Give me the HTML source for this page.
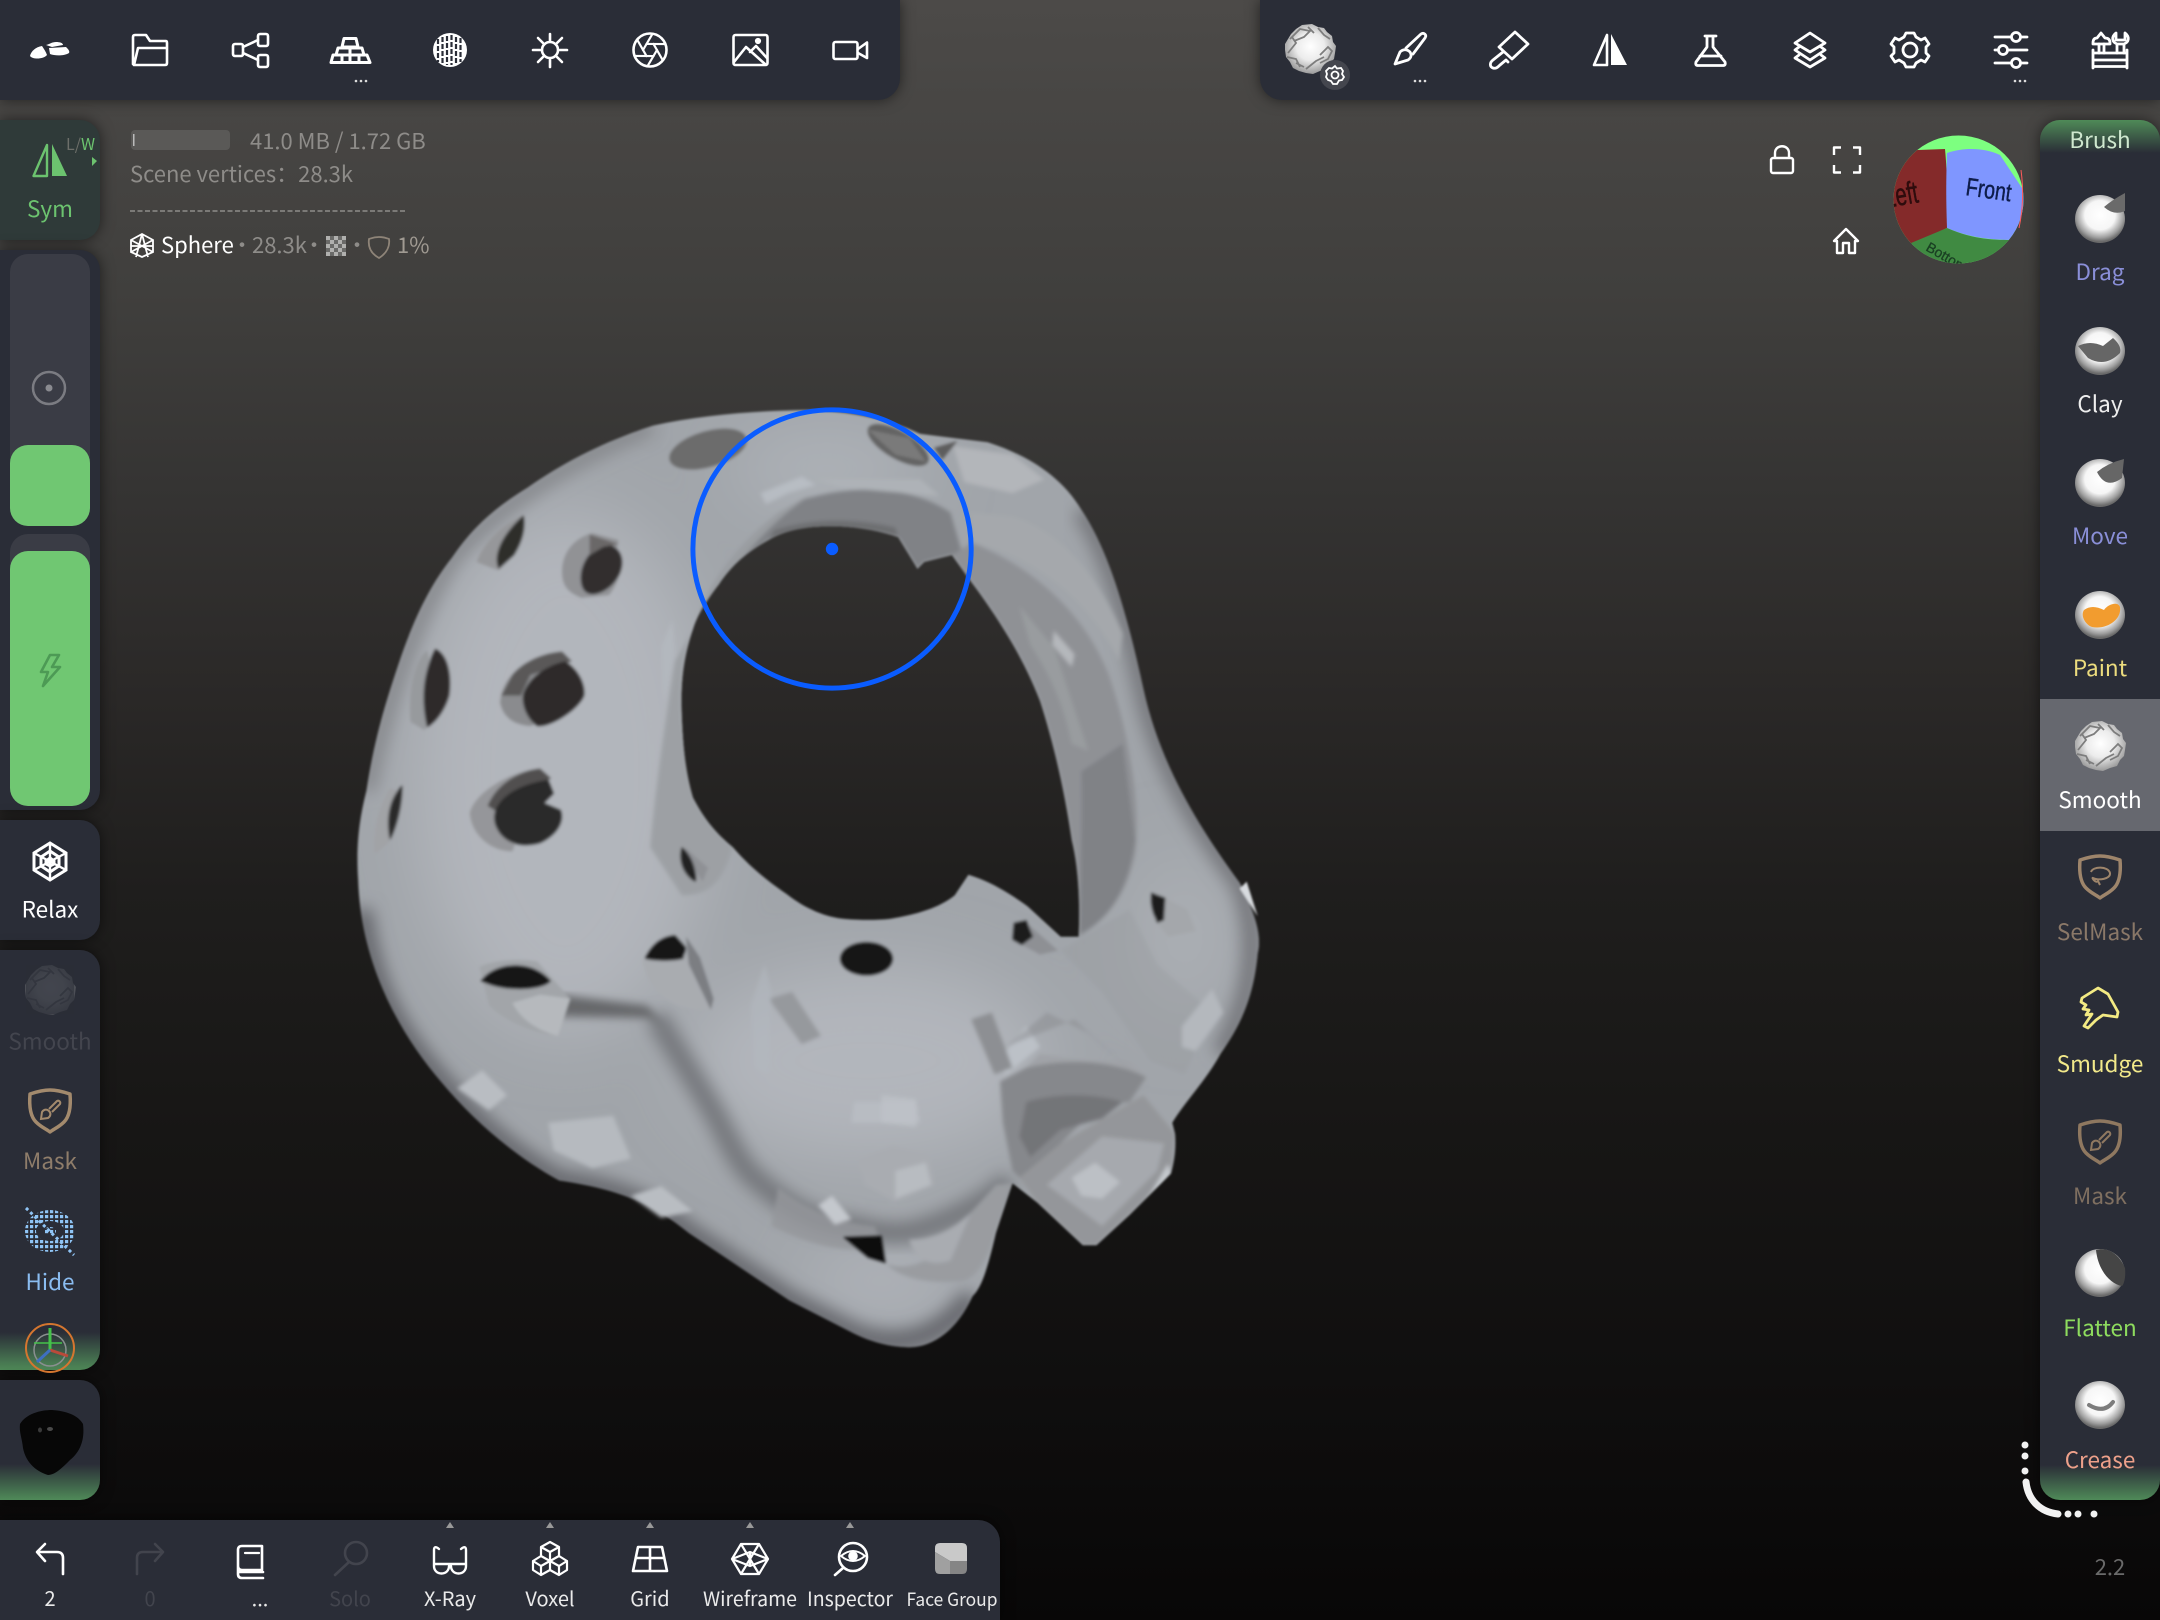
<!DOCTYPE html>
<html><head><meta charset="utf-8">
<style>
html,body{margin:0;padding:0;width:2160px;height:1620px;overflow:hidden;background:#111}
#bg{position:absolute;left:0;top:0;width:2160px;height:1620px;background:linear-gradient(180deg,#4c4a48 0%,#403f3d 18%,#353433 30%,#2b2928 42%,#1f1e1d 55%,#171615 70%,#100f0f 85%,#080707 100%)}
.p{position:absolute;background:#2a2d37;box-shadow:0 0 14px rgba(0,0,0,.55)}
svg{position:absolute;left:0;top:0}
text{font-family:"Noto Sans CJK SC","Liberation Sans",sans-serif}
</style></head><body>
<div id="bg"></div>

<svg width="2160" height="1620" viewBox="0 0 1568 1176" xmlns="http://www.w3.org/2000/svg">
<defs>
<filter id="b1"><feGaussianBlur stdDeviation="0.7"/></filter>
<filter id="b15"><feGaussianBlur stdDeviation="1.400"/></filter>
<filter id="b3"><feGaussianBlur stdDeviation="3"/></filter>
<filter id="b6"><feGaussianBlur stdDeviation="6"/></filter>
<filter id="b25"><feGaussianBlur stdDeviation="25"/></filter>
<clipPath id="sil"><path clip-rule="evenodd" d="M571,298 C610,296 645,304 668,315 L717,321 C745,330 770,345 785,370 C805,400 818,445 830,500 C842,555 870,600 900,641 C912,665 916,680 913,692 C910,725 900,745 886,765 C875,785 860,800 851,815 L853,823 C854,835 852,845 850,852 L820,882 L796,904 L786,904 L753,873 L735,859 L723,895 C716,925 712,935 706,941 C695,965 678,978 660,978 C645,978 630,973 620,968 L573,944 L500,895 C470,870 440,862 406,857 C375,840 345,815 320,785 C290,750 262,700 260,639 C258,610 262,590 266,574 C272,535 280,510 289,483 C300,450 312,425 328,405 C345,380 362,367 383,354 C410,335 440,320 474,309 C505,302 540,299 571,298 Z
M603,382 C585,382 570,385 558,392 C540,402 530,412 522,424 C512,437 506,447 503,457 C495,480 494,500 495,522 C496,545 498,562 503,579 C512,596 520,605 532,615 C545,630 558,640 571,649 C585,660 600,666 613,667 C625,668 636,668 646,667 C665,664 682,659 693,650 L703,635 C720,640 735,650 746,658 L770,680 L783,680 C784,655 783,630 778,610 C773,575 765,540 755,509 C742,475 722,445 704,421 L691,403 L671,408 L666,413 C660,403 655,395 652,390 C638,385 620,382 603,382 Z"/></clipPath>
</defs>

<g filter="url(#b1)">
<path fill="#a1a5aa" fill-rule="evenodd" d="M571,298 C610,296 645,304 668,315 L717,321 C745,330 770,345 785,370 C805,400 818,445 830,500 C842,555 870,600 900,641 C912,665 916,680 913,692 C910,725 900,745 886,765 C875,785 860,800 851,815 L853,823 C854,835 852,845 850,852 L820,882 L796,904 L786,904 L753,873 L735,859 L723,895 C716,925 712,935 706,941 C695,965 678,978 660,978 C645,978 630,973 620,968 L573,944 L500,895 C470,870 440,862 406,857 C375,840 345,815 320,785 C290,750 262,700 260,639 C258,610 262,590 266,574 C272,535 280,510 289,483 C300,450 312,425 328,405 C345,380 362,367 383,354 C410,335 440,320 474,309 C505,302 540,299 571,298 Z
M603,382 C585,382 570,385 558,392 C540,402 530,412 522,424 C512,437 506,447 503,457 C495,480 494,500 495,522 C496,545 498,562 503,579 C512,596 520,605 532,615 C545,630 558,640 571,649 C585,660 600,666 613,667 C625,668 636,668 646,667 C665,664 682,659 693,650 L703,635 C720,640 735,650 746,658 L770,680 L783,680 C784,655 783,630 778,610 C773,575 765,540 755,509 C742,475 722,445 704,421 L691,403 L671,408 L666,413 C660,403 655,395 652,390 C638,385 620,382 603,382 Z"/>

<g clip-path="url(#sil)">
<!-- broad light -->
<g filter="url(#b25)">
<ellipse cx="410" cy="560" rx="110" ry="190" fill="#b2b6bc"/>
<ellipse cx="630" cy="770" rx="130" ry="70" fill="#b2b6bc"/>
<ellipse cx="600" cy="340" rx="70" ry="30" fill="#aeb2b8"/>
<ellipse cx="860" cy="680" rx="40" ry="60" fill="#aaaeb3"/>
<ellipse cx="640" cy="930" rx="60" ry="25" fill="#b0b4ba"/>
</g>
<!-- edge darkening -->
<path fill="none" stroke="#66686d" stroke-width="16" filter="url(#b6)" d="M262,660 C270,720 290,750 320,785 C345,815 375,840 406,857 C440,862 470,870 500,895 L573,944 L620,968 C645,978 678,978 706,941"/>
<path fill="none" stroke="#85878b" stroke-width="12" filter="url(#b6)" d="M266,574 C280,510 300,450 328,405 C362,367 410,335 474,309"/>
<path fill="none" stroke="#74767a" stroke-width="14" filter="url(#b6)" d="M785,370 C805,400 818,445 830,500 C842,555 870,600 900,641 C916,680 910,725 886,765"/>
<!-- nose ridge -->
<path fill="none" stroke="#75777b" stroke-width="16" filter="url(#b6)" d="M476,738 C495,770 508,790 520,811 C532,835 540,850 550,857 C575,880 600,890 620,890 C640,896 655,896 666,893 C695,885 720,870 733,857"/>
<path fill="#66676a" filter="url(#b3)" d="M406,722 L470,730 L482,745 L470,739 L406,738Z"/>

<g filter="url(#b15)">
<!-- upper hole rim -->
<path fill="#808286" d="M522,424 C535,400 555,375 585,362 C620,352 660,352 690,372 L704,421 L691,403 L671,408 L666,413 L652,390 C620,380 585,380 558,392 Z"/>
<path fill="#9a9da1" d="M505,455 C512,425 535,395 565,372 L590,358 C565,375 545,395 525,425 Z"/>
<path fill="#6d6e71" d="M558,392 C585,382 625,382 652,390 L650,383 C620,376 590,376 562,385 Z"/>
<path fill="#bec3ca" d="M552,358 L582,346 L592,352 L572,358 L556,366 Z" opacity=".7"/>
<path fill="#aeb2b7" d="M592,348 H668 L682,360 L612,354 Z"/>
<!-- inner left shading -->
<path fill="#9da0a4" d="M495,522 C494,500 495,480 503,457 L490,480 C482,530 476,570 472,615 L495,650 C515,650 525,640 532,615 C512,596 503,579 495,522 Z"/>
<path fill="#b3b8be" d="M480,470 L488,450 L490,475 L482,510Z"/>
<!-- right band -->
<path fill="#b3b6ba" d="M692,324 L735,330 L758,348 L735,358 L700,350Z"/>
<path fill="#8f9195" d="M704,421 L691,403 L706,394 C745,410 785,440 805,490 C822,540 828,590 824,620 C818,650 803,668 783,680 C784,655 783,630 778,610 C773,575 765,540 755,509 C742,475 722,445 704,421 Z"/>
<path fill="#a5a8ac" d="M706,394 C745,402 790,432 812,480 L815,460 C798,420 770,385 735,375 L705,372Z"/>
<path fill="#a0a3a7" d="M740,440 L765,470 L785,530 L790,545 L778,540 C772,510 762,490 748,468Z" opacity=".6"/>
<path fill="#b5b8bc" d="M765,458 L780,475 L778,484 L764,468Z"/>
<path fill="#808286" d="M785,560 L815,540 L824,610 C818,650 803,668 784,678 C784,640 786,600 785,560Z"/>
<!-- nose -->
<path fill="#b8bcc2" d="M620,800 H665 L668,815 H618Z"/>
<path fill="#bfc3c9" d="M640,795 L665,798 V818 L640,815Z" opacity=".7"/>
<path fill="#96999d" d="M558,725 L575,720 L596,752 L582,758 Z"/>
<path fill="#b3b8be" d="M545,730 L555,700 L560,720 L558,780 L548,775Z" opacity=".6"/>
<!-- lower ring -->
<path fill="#86888c" d="M726,785 L745,775 C775,768 810,768 832,782 L820,800 L800,802 L785,815 L770,830 L745,860 L735,850 L728,815Z"/>
<path fill="#737478" d="M745,800 C760,795 790,792 815,800 L800,812 L770,820 L748,840 L740,825Z"/>
<path fill="#a0a3a7" d="M745,775 L755,765 L790,770 L820,770 L832,782 C810,770 775,768 745,775Z"/>
<path fill="#bcc1c7" d="M725,770 L745,745 L755,760 L730,780Z"/>
<path fill="#8d8f93" d="M705,740 L720,735 L735,775 L722,780 Z"/>
<path fill="#8a8c90" d="M730,760 L780,740 L835,790 L790,750 L760,735Z" opacity=".5"/>
<!-- lower right lobe -->
<path fill="#94969a" d="M740,855 L770,830 L830,795 L853,823 L850,852 L796,904 L786,904 L753,873Z"/>
<path fill="#a6a9ae" d="M760,860 L800,825 L845,830 L840,850 L800,890Z"/>
<path fill="#bcc0c5" d="M778,855 L795,844 L813,858 L800,870 L785,868Z"/>
<path fill="#c6cacf" d="M830,875 L848,845 L850,852 L835,880Z"/>
<!-- bottom inner cavity -->
<path fill="#9a9ca0" d="M643,917 C660,925 690,912 705,880 L723,860 L735,859 L723,895 C718,910 712,925 700,930 C680,932 655,930 643,917Z"/>
<path fill="#a9acb1" d="M660,900 C680,900 695,890 705,880 L690,915 C675,920 665,915 660,900Z"/>
<path fill="#95979b" d="M560,890 C590,905 615,910 640,905 L635,890 C610,888 585,878 565,862Z" opacity=".8"/>
<path fill="#95989c" d="M770,690 L820,660 L840,700 L880,735 L860,780 L835,770 L800,720Z" opacity=".3"/>
</g>
</g>

<!-- holes + walls -->
<g filter="url(#b1)">
<ellipse cx="514" cy="326" rx="29" ry="13" transform="rotate(-16 514 326)" fill="#6c6c6c"/>
<ellipse cx="652" cy="323" rx="25" ry="10" transform="rotate(30 652 323)" fill="#646464"/>
<path d="M630,312 L660,318 L672,335 L650,330Z" fill="#7a7a7a"/>
<path d="M678,325 L695,320 L684,334Z" fill="#5d5d5d"/>

<path d="M380,374 C365,380 350,395 346,408 L356,412 L362,414 L373,403 C378,393 381,384 380,374Z" fill="#96979a"/>
<path d="M380,374 C382,385 378,395 373,403 L362,413 C358,405 362,390 380,374Z" fill="#2f2d2c"/>

<path d="M430,387 C418,390 408,400 408,415 C408,425 412,430 422,434 L442,432 C452,420 452,405 448,398 L449,392Z" fill="#919295"/>
<path d="M436,395 C426,402 420,412 422,424 C424,433 432,433 440,428 C450,422 455,408 449,400 C446,396 441,394 436,395Z" fill="#302e2d"/>
<path d="M428,388 L449,395 L438,397 L428,403Z" fill="#6a6868"/>

<path d="M310,472 C300,480 296,505 298,524 L308,530 L322,515Z" fill="#979a9d"/>
<path d="M316,471 C325,475 328,490 326,505 C322,518 315,525 310,528 C306,510 306,490 316,471Z" fill="#2e2c2b"/>

<path d="M400,475 C380,480 365,490 363,510 C365,520 372,526 385,527 L415,515 L400,490 Z" fill="#8a8b8e"/>
<path d="M372,490 C380,480 395,474 408,473 L415,480 L385,490 L378,505 L364,505Z" fill="#5a5858"/>
<path d="M410,480 C420,486 425,497 424,505 C420,515 400,528 390,527 C382,522 378,510 380,503 C385,490 398,483 410,480Z" fill="#2e2c2b"/>

<path d="M392,558 C370,560 345,575 341,590 C342,605 355,618 372,618 L385,580Z" fill="#95969a"/>
<path d="M392,558 C375,560 360,570 354,585 L362,590 L380,574 L400,565Z" fill="#514f4f"/>
<path d="M398,566 L402,576 L395,583 L407,588 C410,596 405,606 392,612 C378,616 365,612 360,600 C354,585 370,570 398,566Z" fill="#2c2a29"/>

<path d="M283,572 C275,585 270,605 272,620 L282,612 L292,575Z" fill="#a1a3a6"/>
<path d="M292,570 C292,585 288,600 283,610 C280,595 282,580 292,570Z" fill="#2c2a29"/>

<path d="M497,615 L514,630 L510,640 L500,625Z" fill="#8f9195"/>
<path d="M495,615 C502,620 506,632 505,640 C497,636 492,625 495,615Z" fill="#232120"/>

<path d="M348,702 C355,698 375,695 390,698 L414,725 L405,752 C385,750 365,740 355,730Z" fill="#a2a5a9"/>
<path d="M372,728 L392,722 L414,725 L405,752 C390,748 378,740 372,728Z" fill="#b6b9bd"/>
<path d="M349,712 C358,699 385,695 400,712 C395,719 365,721 349,712Z" fill="#191817"/>

<path d="M466,697 L498,693 L516,733 C495,735 478,725 470,710Z" fill="#a9acb0"/>
<path d="M498,680 L508,695 L518,725 L516,733 L500,700Z" fill="#7c7e82"/>
<path d="M468,696 C472,688 478,680 490,679 L498,688 L496,696 C490,698 475,698 468,696Z" fill="#191817"/>

<ellipse cx="629" cy="696" rx="19" ry="12" fill="#191817"/>

<path d="M743,668 L768,690 L755,693 L735,682 Z" fill="#8e9094"/>
<path d="M736,670 L745,668 L750,680 L742,686 L735,682Z" fill="#1c1b1a"/>

<path d="M838,648 L862,660 L868,676 L848,680 L838,668Z" fill="#a4a7ab"/>
<path d="M836,648 L846,652 L845,668 L840,670 C836,660 835,655 836,648Z" fill="#1c1b1a"/>
</g>
<g filter="url(#b15)">
<path d="M332,790 L350,777 L368,795 L355,806Z" fill="#b9bdc2"/>
<path d="M398,815 L445,810 L458,841 L430,848 L402,835Z" fill="#b6babf"/>
<path d="M458,868 L480,861 L503,879 L480,884Z" fill="#b9bdc2"/>
<path d="M622,842 L648,832 L675,838 L678,860 L650,872 L628,860Z" fill="#a9acb1"/>
<path d="M650,850 L672,844 L676,860 L650,870Z" fill="#b8bcc1"/>
<path d="M594,875 L604,868 L618,885 L606,889Z" fill="#c4c8cd"/>
<path d="M858,745 L880,718 L888,735 L868,763 L858,760Z" fill="#b4b8bd"/>
</g>
<path d="M612,898 L640,897 L643,917 L630,913Z" fill="#0f0e0e" filter="url(#b1)"/>
<path d="M905,640 L913,665 L900,645Z" fill="#d8dbdf"/>
</g>

<!-- brush circle -->
<circle cx="604" cy="398.500" r="101" fill="none" stroke="#0a5cff" stroke-width="3.600"/>
<circle cx="604" cy="398.500" r="4.500" fill="#0a5cff"/>
</svg>

<!-- panels -->
<div class="p" style="left:0;top:0;width:900px;height:100px;border-radius:0 0 22px 0"></div>
<div class="p" style="left:1260px;top:0;width:900px;height:100px;border-radius:0 0 0 22px"></div>
<div class="p" style="left:0;top:120px;width:100px;height:120px;border-radius:0 20px 20px 0;background:#2f3a39"></div>
<div class="p" style="left:0;top:250px;width:100px;height:560px;border-radius:0 20px 20px 0"></div>
<div style="position:absolute;left:10px;top:254px;width:80px;height:272px;border-radius:18px;background:#3a3c45"></div>
<div style="position:absolute;left:10px;top:445px;width:80px;height:81px;border-radius:18px;background:#70c772"></div>
<div style="position:absolute;left:10px;top:534px;width:80px;height:272px;border-radius:18px;background:#3a3c45"></div>
<div style="position:absolute;left:10px;top:551px;width:80px;height:255px;border-radius:18px;background:#70c772"></div>
<div class="p" style="left:0;top:820px;width:100px;height:120px;border-radius:0 20px 20px 0"></div>
<div class="p" style="left:0;top:950px;width:100px;height:420px;border-radius:0 20px 20px 0;background:linear-gradient(180deg,#2a2d37 0,#2a2d37 91%,#4f8a58 100%)"></div>
<div class="p" style="left:0;top:1380px;width:100px;height:120px;border-radius:0 20px 20px 0;background:linear-gradient(180deg,#2a2d37 0,#2a2d37 70%,#4f8a58 100%)"></div>
<div class="p" style="left:2040px;top:120px;width:120px;height:1380px;border-radius:20px;background:linear-gradient(180deg,#4f8a58 0,#2a2d37 33px,#2a2d37 1345px,#4f8a58 100%)"></div>
<div style="position:absolute;left:2040px;top:699px;width:120px;height:132px;background:#66686f"></div>
<div class="p" style="left:0;top:1520px;width:1000px;height:100px;border-radius:0 22px 0 0"></div>

<svg width="2160" height="1620" viewBox="0 0 2160 1620" xmlns="http://www.w3.org/2000/svg">
<defs>
<radialGradient id="ball" cx=".5" cy=".42" r=".55"><stop offset="0" stop-color="#fff"/><stop offset=".55" stop-color="#f6f6f6"/><stop offset=".85" stop-color="#a0a0a0"/><stop offset="1" stop-color="#6a6a6a"/></radialGradient>
<radialGradient id="ballf" cx=".5" cy=".45" r=".55"><stop offset="0" stop-color="#fff"/><stop offset=".5" stop-color="#ececec"/><stop offset="1" stop-color="#9a9a9a"/></radialGradient>
<pattern id="dotp" width="5" height="5" patternUnits="userSpaceOnUse"><rect width="3.200" height="3.200" fill="#8fc4f5"/></pattern>
<g id="lump"><path fill="url(#ballf)" d="M-8,-24 L2,-25 L8,-22 L14,-21 L17,-17 L22,-13 L23,-7 L26,-3 L25,4 L24,10 L20,14 L17,20 L10,22 L3,25 L-4,24 L-11,22 L-17,19 L-20,13 L-24,8 L-25,1 L-25,-5 L-22,-10 L-19,-15 L-14,-20 Z"/>
<path fill="none" stroke="#7d7d7d" stroke-width="1.800" d="M-20,-10 L-10,-20 L0,-18 L-6,-12 L-16,-8 M-22,4 L-14,-6 L-18,-12 M-23,8 L-14,10 L-10,18 M10,6 L18,-2 L22,2 L18,10 L10,14 M-4,20 L6,12 L14,8 M-14,14 L-6,18 M8,-21 L14,-14 L20,-10 M-2,-22 L4,-16"/>
</g>
<g id="shield"><path d="M0,-20 C7,-20 14,-18 20,-16 C21,-4 20,6 14,12 C9,17 4,19 0,22 C-4,19 -9,17 -14,12 C-20,6 -21,-4 -20,-16 C-14,-18 -7,-20 0,-20Z" fill="none" stroke-width="3.500" stroke-linejoin="round"/></g>
<g id="minibrush"><path d="M-9,9 L-8,2 C-6,-1 -3,-1 -1,1 C1,3 1,6 -2,8 Z M-1,-1 L7,-9 C9,-10 11,-8 10,-6 L2,2" fill="none" stroke-width="2"/></g>
<g id="dots"><circle cx="-5" r="1.300"/><circle cx="0" r="1.300"/><circle cx="5" r="1.300"/></g>
</defs>

<!-- TOP LEFT ICONS -->
<g fill="#fff">
<path d="M30,56 C31,51 36,47 42,46 C44,49 46,52 47,55 C44,59 33,60 30,56Z"/>
<path d="M46,45 C50,44 52,42 56,42 C60,42 63,43 63,45 L52,47Z"/>
<path d="M49,48 L66,47 C68,49 70,51 69,53 C64,56 55,56 50,54Z"/>
</g>
<g fill="none" stroke="#fff" stroke-width="2.600" stroke-linejoin="round" stroke-linecap="round">
<path d="M133,64 V37 Q133,35 135,35 H146 L150,41 H166 Q167,41 167,43 V63 Q167,65 165,65 H134 L138,48 H167"/>
<rect x="233" y="44" width="10" height="12" rx="2"/><rect x="258" y="34" width="10" height="12" rx="2"/><rect x="258" y="55" width="10" height="12" rx="2"/>
<path d="M243,47 L258,40 M243,53 L258,60"/>
<g stroke-width="3">
<path d="M344,38.500 H356 L358,47 H342Z"/>
<path d="M338,48 H362 L364,55 H336Z M350,48 V55"/>
<path d="M331,62.500 L333,55 H367 L370,62.500Z M342,55 V62 M350,55 V62 M359,55 V62"/>
</g>
<circle cx="550" cy="50" r="8"/>
<path d="M550,34 V40 M550,60 V67 M533,50 H540 M560,50 H567 M538,38 L543,43 M557,57 L562,62 M562,38 L557,43 M543,57 L538,62"/>
<circle cx="650" cy="50" r="16.500"/>
<g stroke-width="2.200">
<path d="M657,50 L647.500,66.200"/><path d="M657,50 L647.500,66.200" transform="rotate(60 650 50)"/><path d="M657,50 L647.500,66.200" transform="rotate(120 650 50)"/><path d="M657,50 L647.500,66.200" transform="rotate(180 650 50)"/><path d="M657,50 L647.500,66.200" transform="rotate(240 650 50)"/><path d="M657,50 L647.500,66.200" transform="rotate(300 650 50)"/>
</g>
<rect x="733.500" y="35" width="34" height="30" rx="2"/>
<path d="M734,62 L746,47 L765,64"/><path d="M750,52 L756,46 L767,58"/>
<circle cx="758" cy="41" r="1.800" fill="#fff"/>
<rect x="833.500" y="42" width="24" height="17" rx="2"/><path d="M858,49 L867,42.500 V58 L858,53"/>
</g>
<circle cx="450" cy="50" r="17" fill="#fff"/>
<g stroke="#2a2d37" stroke-width="2.200" stroke-dasharray="5 2"><path d="M438,39 V62 M442.500,37 V64 M447,36 V65 M451.500,35 V65 M456,37 V64 M460.500,38 V62"/></g>
<use href="#dots" x="361" y="81" fill="#ddd"/>

<!-- TOP RIGHT -->
<use href="#lump" x="1310" y="49"/>
<circle cx="1335" cy="75" r="15" fill="#44464e"/>
<g fill="none" stroke="#fff" stroke-width="1.800"><path d="M1335,66 L1337,68.500 L1341,68 L1343,71 L1342,74 L1344,77 L1342,80 L1339,80.500 L1337,84 L1333,84 L1331,81 L1328,80 L1326,77 L1327,74 L1326,71 L1329,68 L1332,68.500Z"/><circle cx="1335" cy="75" r="3.500"/></g>
<g fill="none" stroke="#fff" stroke-width="2.800" stroke-linejoin="round" stroke-linecap="round">
<path d="M1395,64 L1400,52 C1403,49 1407,49 1410,52 C1412,55 1411,58 1408,60 Z"/>
<path d="M1406,48 L1421,34 C1424,32 1427,35 1425,38 L1413,54"/>
<path d="M1515,32 L1528,44 L1512,59 L1499,47Z"/>
<path d="M1503,52 L1493,60 C1489,63 1490,67 1493,68 C1496,69 1498,67 1500,65 L1506,60 L1508,62"/>
<path d="M1705,36 H1716 M1707,36 V47 L1696,62 Q1695,65.500 1698,65.500 H1723 Q1726,65.500 1725,62 L1713,47 V36 M1700,56 H1721"/>
<path d="M1810,33 L1825,43 L1810,52 L1795,43Z"/>
<path d="M1799,47 L1795,50 L1810,60 L1825,50 L1821,47"/>
<path d="M1799,55 L1795,58 L1810,67 L1825,58 L1821,55"/>
<path d="M1906,33 H1914 L1916,37 L1921,40 L1925,38 L1929,44 L1926,47 V53 L1929,56 L1925,62 L1921,60 L1916,63 L1914,67 H1906 L1904,63 L1899,60 L1895,62 L1891,56 L1894,53 V47 L1891,44 L1895,38 L1899,40 L1904,37Z"/>
<circle cx="1910" cy="50" r="7"/>
<path d="M1995,37 H2027 M1995,50 H2027 M1995,63 H2027"/>
<circle cx="2016" cy="37" r="4.500" fill="#2a2d37"/><circle cx="2003" cy="50" r="4.500" fill="#2a2d37"/><circle cx="2016" cy="63" r="4.500" fill="#2a2d37"/>
<path d="M2093,50 V68 M2127,50 V68 M2093,53 H2127 M2093,60 H2127 M2093,66.500 H2127"/>
<path d="M2099,44 V53 M2104,44 V53"/>
<path d="M2093,43 Q2093,38 2097,38 L2101,33 L2105,38 Q2110,38 2110,43 V44 H2093Z"/>
<path d="M2117,44 V53 M2124,44 V53 M2116,33 C2111,37 2112,42 2117,44 H2124 C2129,42 2130,37 2125,33 V40 H2116Z"/>
</g>
<path d="M1607,35 V65 H1594Z" fill="none" stroke="#fff" stroke-width="2.600" stroke-linejoin="round"/>
<path d="M1611,34 L1627,65 H1611Z" fill="#fff"/>
<use href="#dots" x="1420" y="81" fill="#ddd"/><use href="#dots" x="2020" y="81" fill="#ddd"/>

<!-- info text -->
<rect x="131" y="130" width="99" height="20" rx="4" fill="#5a5957"/>
<rect x="133" y="134" width="1.500" height="12" fill="#bbb"/>
<g font-size="22" fill="#8e8c89">
<text x="250" y="149">41.0 MB / 1.72 GB</text>
<text x="130" y="182">Scene vertices：28.3k</text>
<text x="231" y="253">·</text>
<text x="252" y="253">28.3k</text>
<text x="303" y="253">·</text>
<text x="346" y="253">·</text>
<text x="397" y="253" fill="#a09a92">1%</text>
</g>
<line x1="130" y1="211" x2="406" y2="211" stroke="#8e8c89" stroke-width="1.500" stroke-dasharray="5 2.500"/>
<g fill="none" stroke="#fff" stroke-width="1.800"><path d="M142,234 L153,240 V252 L142,257 L131,252 V240Z M131,240 L153,252 M153,240 L131,252 M142,234 L136,257 M142,234 L148,257 M131,246 H153"/></g>
<text x="161" y="253" font-size="22" fill="#fff">Sphere</text>
<rect x="326" y="236" width="20" height="20" fill="#6a6a68"/>
<g fill="#b0b0ae"><path d="M326,236h4v4h-4zM334,236h4v4h-4zM342,236h4v4h-4zM330,240h4v4h-4zM338,240h4v4h-4zM326,244h4v4h-4zM334,244h4v4h-4zM342,244h4v4h-4zM330,248h4v4h-4zM338,248h4v4h-4zM326,252h4v4h-4zM334,252h4v4h-4zM342,252h4v4h-4z"/></g>
<path d="M379,237 C374,237 372,238 369,239 C368,246 370,253 379,258 C387,253 390,246 389,239 C386,238 384,237 379,237Z" fill="none" stroke="#8e8478" stroke-width="1.800"/>

<!-- lock, fullscreen, home -->
<g fill="none" stroke="#fff" stroke-width="2.400" stroke-linejoin="round">
<rect x="1771" y="158" width="22" height="15" rx="2"/><path d="M1775,158 V153 C1775,144 1789,144 1789,153 V158"/>
<path d="M1834,155 V147.500 H1841 M1853,147.500 H1860 V155 M1860,165 V172.500 H1853 M1841,172.500 H1834 V165"/>
<path d="M1846,229 L1834,241 H1837 V253 H1843 V243 H1849 V253 H1855 V241 H1858Z"/>
</g>

<!-- gizmo ball -->
<clipPath id="gz"><ellipse cx="1958.500" cy="199.500" rx="65" ry="64"/></clipPath>
<g clip-path="url(#gz)">
<rect x="1890" y="130" width="140" height="140" fill="#7dff80"/>
<path d="M1890,151 L1945,149 Q1948,180 1947,228 L1910,245 L1890,240Z" fill="#842a2a"/>
<path d="M1947,153 C1965,147 1985,148 2000,155 L2030,200 L2020,240 C2000,240 1975,240 1947,228 C1946,200 1946,180 1947,153Z" fill="#7f96ff"/>
<path d="M1911,243 L1947,228 C1975,240 1995,240 2015,240 L2000,270 H1925Z" fill="#408a42"/>
<text font-size="23" fill="#0e1c4a" font-family="Liberation Sans" stroke="#0e1c4a" stroke-width=".4" transform="translate(1965,195) rotate(8) scale(.85,1.100)" style="font-family:'Liberation Sans',sans-serif">Front</text>
<text font-size="24" fill="#2e0c0d" stroke="#2e0c0d" stroke-width=".4" transform="translate(1886,208) rotate(-10) scale(.85,1.300)" style="font-family:'Liberation Sans',sans-serif">Left</text>
<text font-size="14" fill="#1a4023" stroke="#1a4023" stroke-width=".3" transform="translate(1925,250) rotate(30)" style="font-family:'Liberation Sans',sans-serif">Bottom</text>
</g>
<path d="M2021,170 Q2025,200 2019,228" fill="none" stroke="#ff5a5a" stroke-width="1"/>

<!-- LEFT COLUMN -->
<path d="M47,145 V176 H33.500Z" fill="none" stroke="#6cc36f" stroke-width="2.400" stroke-linejoin="round"/>
<path d="M52,144 L67,176 H52Z" fill="#6cc36f"/>
<text x="66" y="150" font-size="16" fill="#6d6f6a">L/</text>
<text x="81" y="150" font-size="16" fill="#6cc36f">W</text>
<path d="M92,157 L97,161 L92,166Z" fill="#6cc36f"/>
<text x="50" y="217" text-anchor="middle" font-size="22.500" fill="#6cc36f">Sym</text>
<circle cx="49" cy="388" r="16" fill="none" stroke="#7b7c82" stroke-width="2.500"/><circle cx="49" cy="388" r="3.500" fill="#8a8b90"/>
<path d="M56,655 H50 L41,672 H48 L43,686 L60,667 H52 L59,655Z" fill="none" stroke="#4d9a55" stroke-width="2.600" stroke-linejoin="round"/>

<g fill="none" stroke="#fff" stroke-width="3"><path d="M50,843 L66,853 V870 L50,880 L34,870 V853Z"/>
<path d="M50,843 V880 M34,853 L66,870 M66,853 L34,870" stroke-width="2.400"/>
<path d="M50,851 L59,857 V866 L50,872 L41,866 V857Z"/><path d="M50,858 L54,861 V864 L50,866 L46,864 V861Z"/></g>
<text x="50" y="917.500" text-anchor="middle" font-size="22.500" fill="#fff">Relax</text>

<g opacity=".26"><use href="#lump" x="50" y="990"/></g>
<path d="M26,965 H74 V1014 H26Z" fill="#2a2d37" opacity=".55"/>
<text x="50" y="1049.500" text-anchor="middle" font-size="22.500" fill="#43454e">Smooth</text>
<use href="#shield" x="50" y="1110" stroke="#a38a6d"/><use href="#minibrush" x="50" y="1110" stroke="#a38a6d"/>
<text x="50" y="1169" text-anchor="middle" font-size="22.500" fill="#8f7d6a">Mask</text>
<path fill-rule="evenodd" fill="url(#dotp)" d="M25,1231 A25,21 0 1,1 75,1231 A25,21 0 1,1 25,1231Z M36,1231 A14,10 0 1,0 64,1231 A14,10 0 1,0 36,1231Z M44,1231 A6,4 0 1,1 56,1231 A6,4 0 1,1 44,1231Z"/>
<path d="M26,1208 L74,1255" stroke="#8fc4f5" stroke-width="3" stroke-dasharray="3 3" fill="none"/>
<text x="50" y="1290" text-anchor="middle" font-size="22.500" fill="#8abcf0">Hide</text>
<g fill="none">
<circle cx="50" cy="1348" r="24" stroke="#d5762f" stroke-width="2"/>
<circle cx="50" cy="1350" r="16" stroke="#8a8f90" stroke-width="1.500"/>
<path d="M50,1350 V1328" stroke="#44c24a" stroke-width="3"/>
<path d="M50,1350 L68,1356" stroke="#b94a3a" stroke-width="3"/>
<path d="M50,1350 L37,1362" stroke="#3e6fc0" stroke-width="3"/>
<path d="M34,1343 L62,1343" stroke="#44c24a" stroke-width="1.500"/>
</g>
<path d="M20,1424 C26,1414 40,1410 52,1410 C66,1411 78,1415 83,1424 C85,1440 80,1452 70,1460 C62,1468 55,1475 48,1475 C38,1472 26,1464 23,1448 C22,1438 19,1432 20,1424Z" fill="#070707"/>
<ellipse cx="40" cy="1430" rx="2" ry="2.500" fill="#3a3a3a"/><ellipse cx="50" cy="1429" rx="3" ry="2" fill="#4a4a4a"/>

<!-- RIGHT BRUSH COLUMN -->
<g font-size="22.500" text-anchor="middle">
<text x="2100" y="148" fill="#cfe8cf">Brush</text>
<text x="2100" y="280" fill="#8a8fd8">Drag</text>
<text x="2100" y="412" fill="#eee">Clay</text>
<text x="2100" y="544" fill="#8a8fd8">Move</text>
<text x="2100" y="676" fill="#ecdc7e">Paint</text>
<text x="2100" y="808" fill="#fff">Smooth</text>
<text x="2100" y="940" fill="#8a7868">SelMask</text>
<text x="2100" y="1072" fill="#f2e98a">Smudge</text>
<text x="2100" y="1204" fill="#7f6f60">Mask</text>
<text x="2100" y="1336" fill="#8edc5e">Flatten</text>
<text x="2100" y="1468" fill="#eda08a">Crease</text>
</g>
<ellipse cx="2100" cy="219" rx="25" ry="24" fill="url(#ball)"/>
<path d="M2104,207 Q2112,200 2125,193 V211 Q2114,216 2104,207Z" fill="#6a6a6a"/>

<ellipse cx="2100" cy="351" rx="25" ry="24" fill="url(#ball)"/>
<path d="M2078,346 Q2090,340 2103,346 L2113,338 Q2122,346 2120,353 Q2105,368 2088,358Z" fill="#666"/>

<ellipse cx="2100" cy="483" rx="25" ry="24" fill="url(#ball)"/>
<path d="M2097,472 Q2108,463 2124,459 L2122,478 Q2106,490 2097,472Z" fill="#666"/>

<ellipse cx="2100" cy="615" rx="25" ry="24" fill="url(#ball)"/>
<path d="M2084,610 Q2092,604 2104,610 C2108,604 2118,601 2120,607 C2122,620 2106,630 2092,627 C2086,625 2080,616 2084,610Z" fill="#f29c2f"/>

<use href="#lump" x="2100" y="746"/>

<use href="#shield" x="2100" y="876" stroke="#9e856b"/>
<path d="M2091,872 C2093,866 2108,866 2110,873 C2111,879 2098,881 2093,878 C2091,877 2096,884 2098,881 L2100,885" fill="none" stroke="#9e856b" stroke-width="2"/>

<path d="M2082,998 L2098,988 L2108,994 L2118,1012 L2117,1017 L2103,1015 L2096,1020 L2088,1028 L2084,1026 L2092,1014 L2086,1015 L2089,1010 L2083,1009 L2086,1005 L2081,1002Z" fill="none" stroke="#f3ea83" stroke-width="2.800" stroke-linejoin="round"/>

<use href="#shield" x="2100" y="1141" stroke="#8f7860"/><use href="#minibrush" x="2100" y="1141" stroke="#8f7860"/>

<ellipse cx="2100" cy="1273" rx="25" ry="24" fill="url(#ball)"/>
<path d="M2096,1250 C2106,1247 2118,1252 2125,1268 C2126,1277 2124,1284 2122,1286 C2110,1284 2098,1270 2096,1250Z" fill="#454545"/>

<ellipse cx="2100" cy="1405" rx="25" ry="24" fill="url(#ball)"/>
<path d="M2089,1405 Q2104,1414 2113,1402" fill="none" stroke="#7d7d7d" stroke-width="4" stroke-linecap="round"/>

<!-- corner handle -->
<g fill="#f2f2f2"><circle cx="2025" cy="1445" r="3.500"/><circle cx="2025" cy="1456" r="3.500"/><circle cx="2025" cy="1471" r="3.500"/>
<circle cx="2068" cy="1514" r="3.500"/><circle cx="2078" cy="1514" r="3.500"/><circle cx="2094" cy="1514" r="3.500"/></g>
<path d="M2026,1482 C2028,1500 2040,1512 2058,1514" fill="none" stroke="#f2f2f2" stroke-width="7" stroke-linecap="round"/>
<text x="2110" y="1575" text-anchor="middle" font-size="22" fill="#6a6a6a">2.2</text>

<!-- BOTTOM BAR -->
<g fill="#999"><path d="M450,1522 L454,1528 H446Z M550,1522 L554,1528 H546Z M650,1522 L654,1528 H646Z M750,1522 L754,1528 H746Z M850,1522 L854,1528 H846Z"/></g>
<g fill="none" stroke="#fff" stroke-width="2.600" stroke-linejoin="round" stroke-linecap="round">
<path d="M45,1544 L37,1552 L45,1561 M38,1552 H57 Q63,1552 63,1558 V1574"/>
<path d="M242,1546 H262 V1570 H242 Q238,1570 238,1566 V1550 Q238,1546 242,1546 M238,1566 V1574 Q238,1578 242,1578 H263 M238,1572 H263"/>
<path d="M245,1553 H259" stroke-width="2.200"/>
<path d="M439,1549 Q434,1545 434,1550 V1566 C434,1576 449,1576 449,1566 M434,1564 H466 M451,1566 C451,1576 466,1576 466,1566 V1550 Q466,1545 461,1549" stroke-width="2.400"/>
<path d="M550,1542 L559,1547 V1556 L550,1561 L541,1556 V1547Z M541,1547 L550,1552 L559,1547 M550,1552 V1561" stroke-width="2.200"/>
<path d="M541,1556 L533,1561 V1570 L541,1575 L550,1570 V1561 M533,1561 L541,1566 L550,1561 M541,1566 V1575" stroke-width="2.200"/>
<path d="M559,1556 L567,1561 V1570 L559,1575 L550,1570 M550,1561 L559,1566 L567,1561 M559,1566 V1575" stroke-width="2.200"/>
<path d="M638,1547 H662 L667,1571 H633Z M650,1547 V1571 M636,1558 H664"/>
<path d="M741,1544 H759 L768,1559 L759,1574 H741 L732,1559Z M741,1544 L759,1574 M759,1544 L741,1574 M732,1559 L750,1552 L768,1559 L750,1566Z M750,1552 V1566" stroke-width="2.200"/>
<circle cx="853" cy="1557" r="14"/><path d="M843,1568 L835,1575"/><path d="M841,1556 Q853,1546 865,1556 Q853,1566 841,1556Z" stroke-width="2"/><circle cx="853" cy="1556" r="3.500" fill="#fff"/>
</g>
<g fill="none" stroke="#42444d" stroke-width="2.600" stroke-linecap="round" stroke-linejoin="round">
<path d="M155,1544 L163,1552 L155,1561 M162,1552 H143 Q137,1552 137,1558 V1574"/>
<circle cx="356" cy="1553" r="11"/><path d="M349,1562 L335,1575"/>
</g>
<path d="M935,1548 Q935,1543 940,1543 H962 Q967,1543 967,1548 V1561 H950 L935,1552Z" fill="#c9c9c9"/>
<path d="M935,1552 L950,1561 V1574 H940 Q935,1574 935,1569Z" fill="#a0a0a0"/>
<path d="M950,1561 H967 V1569 Q967,1574 962,1574 H950Z" fill="#858585"/>
<g font-size="20" fill="#eaeaea" text-anchor="middle">
<text x="50" y="1606">2</text>
<text x="150" y="1606" fill="#42444d">0</text>
<text x="260" y="1606">...</text>
<text x="350" y="1606" fill="#42444d">Solo</text>
<text x="450" y="1606">X-Ray</text>
<text x="550" y="1606">Voxel</text>
<text x="650" y="1606">Grid</text>
<text x="750" y="1606" textLength="94" lengthAdjust="spacingAndGlyphs">Wireframe</text>
<text x="850" y="1606" textLength="86" lengthAdjust="spacingAndGlyphs">Inspector</text>
<text x="952" y="1606" textLength="91" lengthAdjust="spacingAndGlyphs" font-size="18.500">Face Group</text>
</g>
</svg>
</body></html>
